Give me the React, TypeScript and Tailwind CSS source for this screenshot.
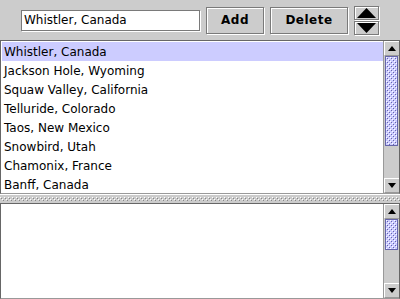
import React from 'react'

const font = "font-['Lucida_Sans','DejaVu_Sans',sans-serif]"

const resorts = [
	'Whistler, Canada',
	'Jackson Hole, Wyoming',
	'Squaw Valley, California',
	'Telluride, Colorado',
	'Taos, New Mexico',
	'Snowbird, Utah',
	'Chamonix, France',
	'Banff, Canada',
]

const Bumps = ({ id, light, dark }: { id: string, light: string, dark: string }) => (
	<svg className="absolute inset-0 w-full h-full" aria-hidden>
		<defs>
			<pattern id={id} width="4" height="4" patternUnits="userSpaceOnUse">
				<rect x="0" y="0" width="1" height="1" fill={light} />
				<rect x="1" y="1" width="1" height="1" fill={dark} />
				<rect x="2" y="2" width="1" height="1" fill={light} />
				<rect x="3" y="3" width="1" height="1" fill={dark} />
			</pattern>
		</defs>
		<rect width="100%" height="100%" fill={`url(#${id})`} />
	</svg>
)

const Tri = ({ up, size = 'small' }: { up?: boolean, size?: 'small' | 'big' }) => (
	size === 'small'
		? <svg width="8" height="5" viewBox="0 0 8 5">
			<path d={up ? 'M0 5 L4 0 L8 5 Z' : 'M0 0 L8 0 L4 5 Z'} fill="#000" />
		</svg>
		: <svg width="19" height="10" viewBox="0 0 19 10">
			<path d={up ? 'M0 10 L9.5 0 L19 10 Z' : 'M0 0 L19 0 L9.5 10 Z'} fill="#000" />
		</svg>
)

const ScrollButton = ({ up }: { up?: boolean }) => (
	<div className="h-[15px] shrink-0 bg-[#cccccc] border-t border-l border-white border-b border-b-[#999999] flex items-center justify-center">
		<Tri up={up} />
	</div>
)

const ScrollBar = ({ top }: { top?: boolean }) => (
	<div className="w-[16px] shrink-0 flex flex-col border-l border-[#999999] bg-[#cccccc]">
		<ScrollButton up />
		{top ? (
			<div className="relative h-[90px] mx-[1px] bg-[#ccccff] border border-[#6666aa] overflow-hidden">
				<Bumps id="tb1" light="#ffffff" dark="#6666aa" />
			</div>
		) : (
			<div className="relative h-[31px] mx-[1px] bg-[#ccccff] border border-[#6666aa] overflow-hidden">
				<Bumps id="tb2" light="#ffffff" dark="#6666aa" />
			</div>
		)}
		<div className="flex-1" />
		<ScrollButton />
	</div>
)

export default function App() {
	return (
		<div className={`${font} w-[400px] h-[299px] bg-[#cccccc] flex flex-col overflow-hidden text-black`}>

			<div className="h-[40px] shrink-0 flex items-center pl-[21px] gap-[6px]">
				<div className="w-[179px] h-[21px] bg-white border border-[#7a7a7a] shadow-[1px_1px_0_#ffffff] flex items-center px-[2px] text-[12px]">
					Whistler, Canada
				</div>
				<button className="w-[58px] h-[27px] border border-[#7a7a7a] shadow-[1px_1px_0_#ffffff,inset_1px_1px_0_#ffffff] text-[12px] font-bold tracking-[0.5px]">
					Add
				</button>
				<button className="w-[78px] h-[27px] border border-[#7a7a7a] shadow-[1px_1px_0_#ffffff,inset_1px_1px_0_#ffffff] text-[12px] font-bold tracking-[0.5px]">
					Delete
				</button>
				<div className="flex flex-col gap-[1px]">
					<div className="w-[25px] h-[14px] border border-[#7a7a7a] shadow-[1px_1px_0_#ffffff,inset_1px_1px_0_#ffffff] flex items-center justify-center">
						<Tri up size="big" />
					</div>
					<div className="w-[25px] h-[14px] border border-[#7a7a7a] shadow-[1px_1px_0_#ffffff,inset_1px_1px_0_#ffffff] flex items-center justify-center">
						<Tri size="big" />
					</div>
				</div>
			</div>

			<div className="h-[154px] shrink-0 flex border-t border-l border-[#666666] border-r border-r-[#666666] border-b border-b-[#999999] bg-white">
				<ul className="flex-1 pl-[1px] pt-[1px] text-[12px]">
					{resorts.map((r, i) => (
						<li key={r} className={`h-[19px] flex items-center pl-[2px] ${i === 0 ? 'bg-[#ccccff]' : ''}`}>
							{r}
						</li>
					))}
				</ul>
				<ScrollBar top />
			</div>

			<div className="relative h-[9px] shrink-0 bg-[#cccccc] border-t border-white">
				<div className="absolute left-0 right-0 top-[2px] h-[4px]">
					<Bumps id="div" light="#ffffff" dark="#888888" />
				</div>
			</div>

			<div className="flex-1 flex border-t border-l border-[#666666] border-r border-r-[#666666] border-b border-b-[#999999] bg-white">
				<div className="flex-1" />
				<ScrollBar />
			</div>
		</div>
	)
}
